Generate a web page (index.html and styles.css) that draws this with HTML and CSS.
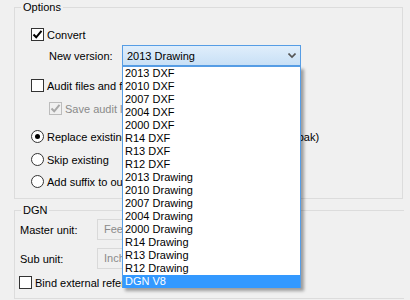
FILE: index.html
```html
<!DOCTYPE html>
<html lang="en">
  <head>
    <meta charset="UTF-8" />
    <title>Options</title>
    <link rel="stylesheet" href="styles.css">
  </head>
  <body>
    <fieldset class="group group-options">
      <legend>Options</legend>

      <div class="row row-convert">
        <span class="check checked">
          <svg width="11" height="11" viewBox="0 0 11 11"><path d="M1.5 5.5 L4.2 8.3 L9.5 1.8" fill="none" stroke="#000" stroke-width="2"/></svg>
        </span>
        <span class="text">Convert</span>
      </div>

      <div class="row row-version">
        <span class="field-label">New version:</span>
        <div class="combo">
          <span class="combo-value">2013 Drawing</span>
          <svg class="chevron" width="8" height="6" viewBox="0 0 8 6"><path d="M0.5 0.5 L4 4 L7.5 0.5" fill="none" stroke="#555" stroke-width="1.6"/></svg>

          <ul class="combo-list">
            <li>2013 DXF</li>
            <li>2010 DXF</li>
            <li>2007 DXF</li>
            <li>2004 DXF</li>
            <li>2000 DXF</li>
            <li>R14 DXF</li>
            <li>R13 DXF</li>
            <li>R12 DXF</li>
            <li>2013 Drawing</li>
            <li>2010 Drawing</li>
            <li>2007 Drawing</li>
            <li>2004 Drawing</li>
            <li>2000 Drawing</li>
            <li>R14 Drawing</li>
            <li>R13 Drawing</li>
            <li>R12 Drawing</li>
            <li class="selected">DGN V8</li>
          </ul>
        </div>
      </div>

      <div class="row row-audit">
        <span class="check"></span>
        <span class="text">Audit files and fix errors</span>
      </div>

      <div class="row row-save disabled">
        <span class="check checked">
          <svg width="11" height="11" viewBox="0 0 11 11"><path d="M1.5 5.5 L4.2 8.3 L9.5 1.8" fill="none" stroke="#a8a8a8" stroke-width="2"/></svg>
        </span>
        <span class="text">Save audit log</span>
      </div>

      <div class="row row-replace">
        <span class="radio on"></span>
        <span class="text">Replace existing files (keep a copy of originals as *.bak)</span>
      </div>

      <div class="row row-skip">
        <span class="radio"></span>
        <span class="text">Skip existing</span>
      </div>

      <div class="row row-suffix">
        <span class="radio"></span>
        <span class="text">Add suffix to output</span>
      </div>
    </fieldset>

    <fieldset class="group group-dgn">
      <legend>DGN</legend>

      <div class="row row-master">
        <span class="unit-label">Master unit:</span>
        <span class="textbox">Feet</span>
      </div>

      <div class="row row-sub">
        <span class="unit-label">Sub unit:</span>
        <span class="textbox">Inch</span>
      </div>

      <div class="row row-bind">
        <span class="check"></span>
        <span class="text">Bind external references</span>
      </div>
    </fieldset>
  </body>
</html>
```

FILE: styles.css
```css
body {
  margin: 0;
  padding-left: 14px;
  background: #f0f0f0;
  font-family: "Liberation Sans", Arial, sans-serif;
  font-size: 11px;
  color: #000;
  width: 390px;
  height: 300px;
  overflow: hidden;
}
.group {
  margin: 0;
  padding: 0 0 10px 0;
  border: 1px solid #dcdcdc;
  min-width: 0;
}
.group legend {
  margin-left: 6px;
  padding: 0 2px;
  line-height: 14px;
  height: 14px;
}
.group-options {
  width: 387px;
}
.group-dgn {
  margin-top: 4px;
  width: 389px;
  padding-bottom: 9px;
}
.row {
  display: flex;
  align-items: center;
  height: 13px;
  white-space: nowrap;
}
.check {
  box-sizing: border-box;
  width: 13px;
  height: 13px;
  border: 1px solid #333;
  background: #fff;
  display: flex;
  align-items: center;
  justify-content: center;
  flex: none;
}
.radio {
  box-sizing: border-box;
  width: 13px;
  height: 13px;
  border: 1px solid #333;
  border-radius: 50%;
  background: #fff;
  position: relative;
  flex: none;
}
.radio.on::after {
  content: "";
  position: absolute;
  left: 3px;
  top: 3px;
  width: 5px;
  height: 5px;
  border-radius: 50%;
  background: #000;
}
.text {
  margin-left: 3px;
}
.row-convert {
  margin-top: 14px;
  margin-left: 16px;
}
.row-version {
  margin-top: 4px;
  margin-left: 34px;
  height: 21px;
}
.field-label {
  width: 73px;
  flex: none;
}
.combo {
  position: relative;
  box-sizing: border-box;
  width: 179px;
  height: 21px;
  border: 1px solid #569de5;
  background: linear-gradient(#e0eefb, #c8e0f6);
  display: flex;
  align-items: center;
  padding-left: 4px;
}
.combo-value {
  flex: 1;
}
.chevron {
  margin-right: 4px;
}
.combo-list {
  position: absolute;
  left: -1px;
  top: 20px;
  width: 179px;
  box-sizing: border-box;
  margin: 0;
  padding: 0;
  list-style: none;
  background: #fff;
  border: 1px solid #569de5;
  border-bottom: none;
  box-shadow: 3px 3px 3px rgba(0, 0, 0, 0.35);
  z-index: 2;
}
.combo-list li {
  height: 13px;
  line-height: 13px;
  padding-left: 2px;
}
.combo-list li.selected {
  background: #3399ff;
  color: #fff;
}
.row-audit {
  margin-top: 13px;
  margin-left: 16px;
}
.row-save {
  margin-top: 10px;
  margin-left: 34px;
}
.disabled .check {
  border-color: #bcbcbc;
  background: #f0f0f0;
}
.disabled .text {
  color: #8a8a8a;
}
.row-replace {
  margin-top: 15px;
  margin-left: 16px;
}
.row-skip {
  margin-top: 10px;
  margin-left: 16px;
}
.row-suffix {
  margin-top: 9px;
  margin-left: 16px;
}
.row-master {
  margin-top: 2px;
  margin-left: 5px;
  height: 21px;
}
.row-sub {
  margin-top: 8px;
  margin-left: 5px;
  height: 21px;
}
.unit-label {
  width: 77px;
  flex: none;
}
.textbox {
  box-sizing: border-box;
  width: 150px;
  height: 21px;
  border: 1px solid #d9d9d9;
  background: #f0f0f0;
  color: #8a8a8a;
  padding-left: 6px;
  line-height: 19px;
}
.row-bind {
  margin-top: 7px;
  margin-left: 4px;
}
```
